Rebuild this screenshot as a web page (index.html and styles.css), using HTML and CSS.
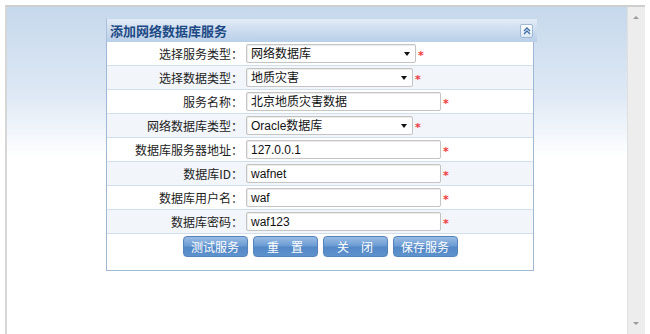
FILE: index.html
```html
<!DOCTYPE html>
<html lang="zh-CN">
<head>
    <meta charset="UTF-8">
    <title>添加网络数据库服务</title>
    <link rel="stylesheet" href="styles.css">
</head>
<body>

    <div class="frame">
        <div class="content">
            <div class="panel">
                <div class="panel-header">
                    <span class="panel-title">添加网络数据库服务</span>
                    <span class="collapse-btn">
                        <svg width="8" height="8" viewBox="0 0 8 8">
                            <path d="M1 4 L4 1 L7 4 M1 7 L4 4 L7 7" fill="none" stroke="#3f6ea6" stroke-width="1.3"/>
                        </svg>
                    </span>
                </div>
                <div class="panel-body">
                    <div class="form-row">
                        <div class="label">选择服务类型：</div>
                        <div class="field">
                            <div class="select short">网络数据库<span class="arrow"></span></div>
                            <span class="required">*</span>
                        </div>
                    </div>
                    <div class="form-row alt">
                        <div class="label">选择数据类型：</div>
                        <div class="field">
                            <div class="select shorter">地质灾害<span class="arrow"></span></div>
                            <span class="required">*</span>
                        </div>
                    </div>
                    <div class="form-row">
                        <div class="label">服务名称：</div>
                        <div class="field">
                            <div class="text-input">北京地质灾害数据</div>
                            <span class="required">*</span>
                        </div>
                    </div>
                    <div class="form-row alt">
                        <div class="label">网络数据库类型：</div>
                        <div class="field">
                            <div class="select shorter">Oracle数据库<span class="arrow"></span></div>
                            <span class="required">*</span>
                        </div>
                    </div>
                    <div class="form-row">
                        <div class="label">数据库服务器地址：</div>
                        <div class="field">
                            <div class="text-input">127.0.0.1</div>
                            <span class="required">*</span>
                        </div>
                    </div>
                    <div class="form-row alt">
                        <div class="label">数据库ID：</div>
                        <div class="field">
                            <div class="text-input">wafnet</div>
                            <span class="required">*</span>
                        </div>
                    </div>
                    <div class="form-row">
                        <div class="label">数据库用户名：</div>
                        <div class="field">
                            <div class="text-input">waf</div>
                            <span class="required">*</span>
                        </div>
                    </div>
                    <div class="form-row alt">
                        <div class="label">数据库密码：</div>
                        <div class="field">
                            <div class="text-input">waf123</div>
                            <span class="required">*</span>
                        </div>
                    </div>
                    <div class="button-row">
                        <button class="btn">测试服务</button>
                        <button class="btn">重&emsp;置</button>
                        <button class="btn">关&emsp;闭</button>
                        <button class="btn">保存服务</button>
                    </div>
                </div>
            </div>
        </div>
        <div class="scrollbar">
            <span class="scroll-up"></span>
            <span class="scroll-down"></span>
        </div>
    </div>

</body>
</html>
```

FILE: styles.css
```css
body {
    margin: 0;
    background-color: #fff;
    font-family: "Noto Sans CJK SC", "Liberation Sans", sans-serif;
    font-size: 12px;
    color: #222;
}

.frame {
    display: flex;
    margin: 5px 0 0 5px;
    width: 640px;
    height: 329px;
    border-top: 2px solid #cfcfcf;
    border-left: 2px solid #d6d6d6;
    box-sizing: border-box;
}

.content {
    flex: 1;
    padding-top: 11px;
    background: linear-gradient(to bottom, #c6d8ec 0px, #dfe9f5 90px, #ffffff 150px);
}

.panel {
    margin-left: 99px;
    width: 428px;
}

.panel-header {
    display: flex;
    justify-content: space-between;
    align-items: center;
    height: 24px;
    padding: 0 4px 0 3px;
    margin-right: -3px;
    background: linear-gradient(to bottom, #e3ecf7 0%, #cddcef 50%, #b9cfe9 100%);
    border-top: 1px solid #c9d8ea;
    border-left: 1px solid #a9c0dc;
    box-sizing: border-box;
}

.panel-title {
    font-weight: bold;
    font-size: 13px;
    color: #1d4a85;
}

.collapse-btn {
    display: flex;
    justify-content: center;
    align-items: center;
    width: 11px;
    height: 12px;
    background: linear-gradient(to bottom, #ffffff, #dde8f5);
    border: 1px solid #9fb8d6;
    border-radius: 2px;
}

.panel-body {
    background-color: #fff;
    border: 1px solid #9fb8d6;
    border-top: none;
}

.form-row {
    display: flex;
    align-items: center;
    height: 24px;
    border-bottom: 1px solid #d3deeb;
    box-sizing: border-box;
}

.form-row.alt {
    background-color: #f2f5fa;
}

.label {
    width: 136px;
    text-align: right;
    padding-right: 3px;
    color: #222;
}

.field {
    display: flex;
    align-items: center;
}

.select,
.text-input {
    position: relative;
    height: 19px;
    line-height: 18px;
    padding-left: 4px;
    background-color: #fff;
    border: 1px solid #c4c4c4;
    border-radius: 2px;
    box-shadow: inset 1px 1px 1px rgba(0, 0, 0, 0.08);
    box-sizing: border-box;
    font-size: 12px;
    color: #111;
    font-family: "Liberation Sans", "Noto Sans CJK SC", sans-serif;
}

.select.short {
    width: 170px;
}

.select.shorter {
    width: 167px;
}

.text-input {
    width: 195px;
}

.arrow {
    position: absolute;
    right: 5px;
    top: 7px;
    border-left: 3px solid transparent;
    border-right: 3px solid transparent;
    border-top: 4px solid #111;
}

.required {
    color: #f0383a;
    font-family: "DejaVu Sans", sans-serif;
    font-size: 11px;
    font-weight: bold;
    margin-left: 2px;
    line-height: 11px;
    padding-top: 3px;
}

.button-row {
    display: flex;
    justify-content: center;
    gap: 5px;
    padding: 2px 0 13px 0;
}

.btn {
    width: 65px;
    height: 21px;
    padding: 0;
    font-family: "Noto Sans CJK SC", sans-serif;
    font-size: 12px;
    color: #fff;
    background: linear-gradient(to bottom, #98bce4 0%, #6d9dd4 45%, #5288c6 55%, #5e92cd 100%);
    border: 1px solid #5683bb;
    border-radius: 4px;
    box-shadow: 0 0 1px rgba(0, 0, 0, 0.2);
}

.scrollbar {
    position: relative;
    width: 17px;
    background-color: #ededed;
    border-left: 1px solid #e0e0e0;
}

.scroll-up,
.scroll-down {
    position: absolute;
    left: 5px;
    border-left: 3px solid transparent;
    border-right: 3px solid transparent;
}

.scroll-up {
    top: 9px;
    border-bottom: 3px solid #9a9a9a;
}

.scroll-down {
    bottom: 9px;
    border-top: 3px solid #9a9a9a;
}
```
